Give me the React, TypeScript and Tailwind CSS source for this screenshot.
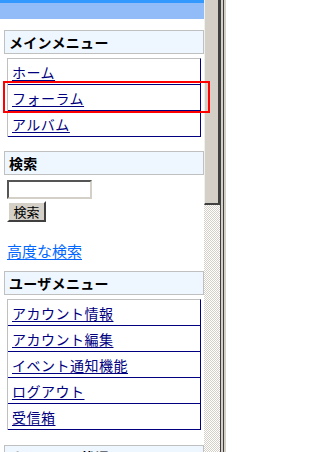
const mainMenu = ["ホーム", "フォーラム", "アルバム"];
const userMenu = ["アカウント情報", "アカウント編集", "イベント通知機能", "ログアウト", "受信箱"];

const font = "font-['Noto_Sans_CJK_JP','Noto_Sans',sans-serif]";

const BlockHeader = ({ title, className = "" }: { title: string; className?: string }) => (
  <div
    className={`h-[24px] flex items-center pl-[4px] border border-[#c0c0c0] bg-[#eef6ff] text-[14px] font-bold text-black tracking-[0.3px] ${className}`}
  >
    {title}
  </div>
);

const MenuList = ({ items }: { items: string[] }) => (
  <div className="mx-[3px] mt-[4px] border-t border-l border-t-[#c0c0c0] border-l-[#c0c0c0] border-r border-r-[#000080]">
    {items.map((item) => (
      <div key={item} className="h-[26px] flex items-center pl-[4px] border-b border-[#000080]">
        <a href="#" className="text-[14px] leading-none text-[#00007f] underline underline-offset-2 tracking-[0.5px]">
          {item}
        </a>
      </div>
    ))}
  </div>
);

export default function App() {
  return (
    <div className={`relative w-[226px] h-[452px] overflow-hidden bg-white flex ${font}`}>
      {/* page */}
      <div className="w-[204px] shrink-0">
        <div className="h-[3px] bg-[#3399ff]" />
        <div className="h-[16px] bg-[#91bcf8]" />

        <div className="pl-[4px]">
          <BlockHeader title="メインメニュー" className="mt-[11px]" />
          <MenuList items={mainMenu} />

          <BlockHeader title="検索" className="mt-[14px]" />
          <div className="ml-[3px] mt-[5px] flex flex-col items-start">
            <input
              type="text"
              className="w-[85px] h-[19px] border-2 border-t-[#555] border-l-[#555] border-b-[#d4d0c8] border-r-[#d4d0c8] bg-white outline-none"
            />
            <button className="mt-[2px] w-[39px] h-[21px] bg-[#d4d0c8] border-2 border-t-white border-l-white border-b-[#404040] border-r-[#404040] text-[13px] leading-none text-black">
              検索
            </button>
            <a href="#" className="mt-[19px] h-[18px] flex items-center text-[15px] leading-none text-[#0066ff] underline underline-offset-2">
              高度な検索
            </a>
          </div>

          <BlockHeader title="ユーザメニュー" className="mt-[12px]" />
          <MenuList items={userMenu} />

          <BlockHeader title="オンライン状況" className="mt-[15px]" />
        </div>
      </div>

      {/* scrollbar */}
      <div className="w-[16px] shrink-0 flex flex-col">
        <div className="h-[205px] bg-[#d4d0c8] border-l border-l-[#f0f0f0] border-r-2 border-r-[#404040] border-b-2 border-b-[#404040]" />
        <div className="flex-1 bg-[repeating-conic-gradient(#d4d0c8_0_25%,#ffffff_0_50%)] bg-[length:2px_2px]" />
      </div>

      {/* window frame */}
      <div className="w-[6px] shrink-0 flex">
        <div className="w-[1px] bg-[#404040]" />
        <div className="w-[2px] bg-[#d4d0c8]" />
        <div className="w-[1px] bg-[#404040]" />
        <div className="w-[2px] bg-[#d4d0c8]" />
      </div>

      {/* highlight */}
      <div className="absolute left-[3px] top-[81px] w-[207px] h-[32px] border-2 border-[#ff0000]" />
    </div>
  );
}
